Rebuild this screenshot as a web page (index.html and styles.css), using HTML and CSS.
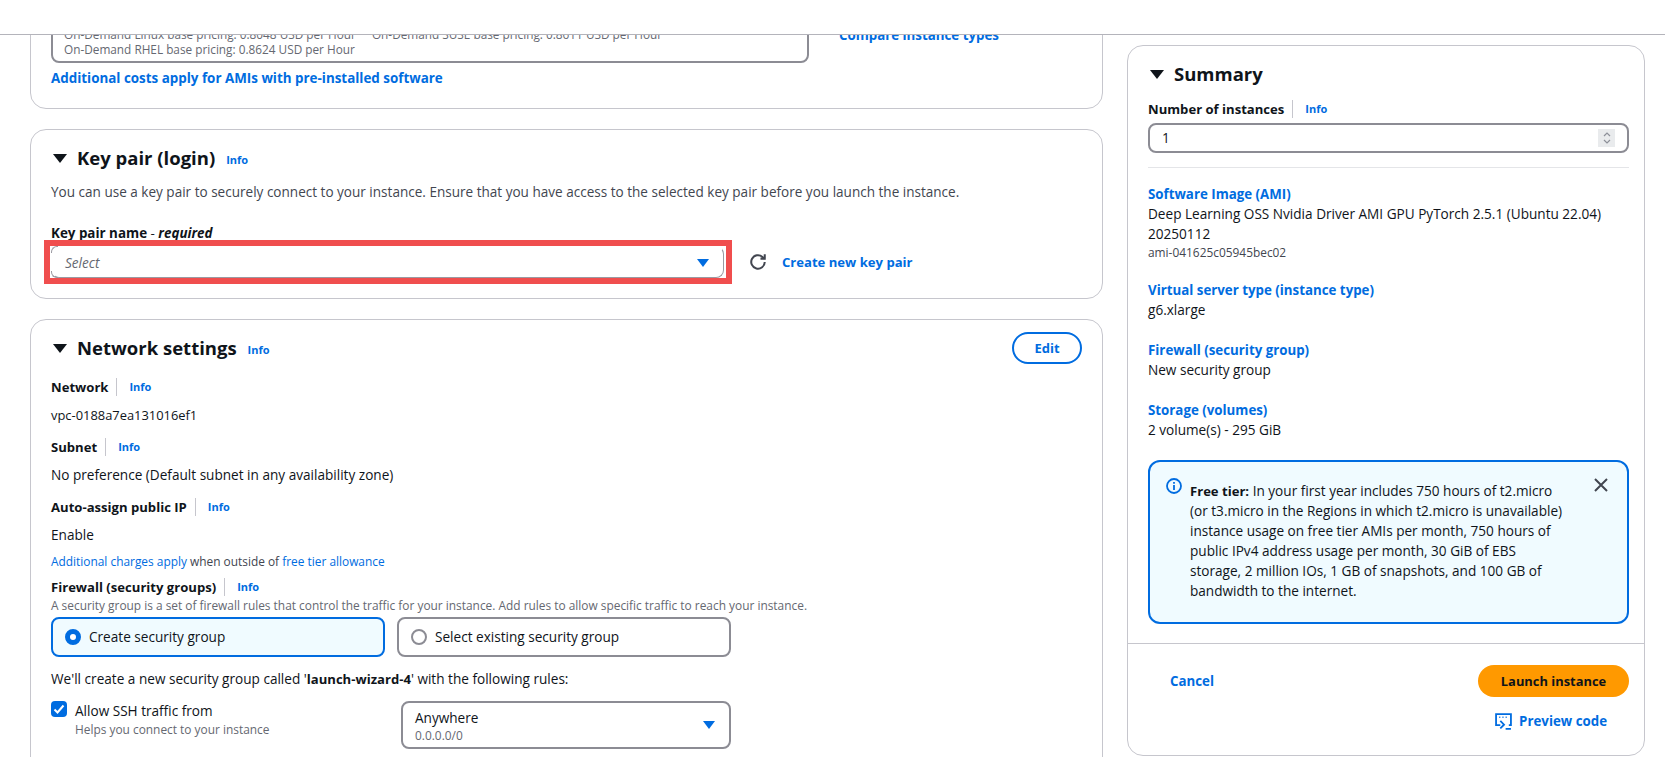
FILE: index.html
```html
<!DOCTYPE html>
<html lang="en">
<head>
<meta charset="utf-8">
<title>Launch an instance</title>
<link rel="stylesheet" href="styles.css">
</head>
<body>
<div class="topbar"></div>
<div class="page">
  <main class="col-left">
    <section class="card card-ami">
      <div class="pricing-row">
        <div class="pricing">
          <div class="pricing-line"><span class="p1">On-Demand Linux base pricing: 0.8048 USD per Hour</span><span>On-Demand SUSE base pricing: 0.8611 USD per Hour</span></div>
          <div class="pricing-line">On-Demand RHEL base pricing: 0.8624 USD per Hour</div>
        </div>
        <a class="link bold compare">Compare instance types</a>
      </div>
      <a class="link bold costs">Additional costs apply for AMIs with pre-installed software</a>
    </section>

    <section class="card card-key">
      <div class="heading"><span class="caret"></span><h2>Key pair (login)</h2><a class="info-h">Info</a></div>
      <p class="desc">You can use a key pair to securely connect to your instance. Ensure that you have access to the selected key pair before you launch the instance.</p>
      <div class="label key-label"><b>Key pair name</b> - <b><i>required</i></b></div>
      <div class="key-row">
        <div class="select-wrap">
          <div class="select"><span>Select</span><span class="tri"></span></div>
          <div class="highlight"></div>
        </div>
        <svg class="refresh" width="18" height="18" viewBox="0 0 16 16" fill="none" stroke="#424650" stroke-width="1.8"><path d="M14 8a6 6 0 1 1-2-4.500L14 5"/><path d="M14 1.200V5h-3.800" stroke-linejoin="miter"/></svg>
        <a class="link bold create">Create new key pair</a>
      </div>
    </section>

    <section class="card card-net">
      <div class="heading net-heading">
        <span class="caret"></span><h2>Network settings</h2><a class="info-h">Info</a>
        <button class="edit">Edit</button>
      </div>
      <div class="field-label"><b>Network</b><a class="info">Info</a></div>
      <div class="value v1 vpc">vpc-0188a7ea131016ef1</div>
      <div class="field-label fl"><b>Subnet</b><a class="info">Info</a></div>
      <div class="value v1">No preference (Default subnet in any availability zone)</div>
      <div class="field-label fl"><b>Auto-assign public IP</b><a class="info">Info</a></div>
      <div class="value v1">Enable</div>
      <div class="small charges"><a class="link">Additional charges apply</a> when outside of <a class="link">free tier allowance</a></div>
      <div class="field-label fw"><b>Firewall (security groups)</b><a class="info">Info</a></div>
      <div class="small muted">A security group is a set of firewall rules that control the traffic for your instance. Add rules to allow specific traffic to reach your instance.</div>
      <div class="tiles">
        <div class="tile tile-on"><span class="radio radio-on"></span>Create security group</div>
        <div class="tile"><span class="radio"></span>Select existing security group</div>
      </div>
      <p class="wizard">We'll create a new security group called '<b>launch-wizard-4</b>' with the following rules:</p>
      <div class="rule">
        <div class="check-col">
          <span class="check"><svg width="16" height="16" viewBox="0 0 16 16" fill="none" stroke="#fff" stroke-width="2"><path d="M3.500 8.500 6.500 11.500 12.500 4.500"/></svg></span>
          <div><div>Allow SSH traffic from</div><div class="small muted">Helps you connect to your instance</div></div>
        </div>
        <div class="select2">
          <div><div>Anywhere</div><div class="small muted">0.0.0.0/0</div></div>
          <span class="tri"></span>
        </div>
      </div>
    </section>
  </main>

  <aside class="summary">
    <div class="sum-top">
      <div class="heading sum-heading"><span class="caret"></span><h2>Summary</h2></div>
      <div class="field-label sum-label"><b>Number of instances</b><a class="info">Info</a></div>
      <div class="num-input"><span>1</span>
        <span class="spin"><svg width="12" height="16" viewBox="0 0 12 16" fill="none" stroke="#8d9099" stroke-width="1.2"><path d="M3 6 6 3l3 3M3 10l3 3 3-3"/></svg></span>
      </div>
      <hr class="rule-line">
      <div class="sum-item first">
        <a class="link bold">Software Image (AMI)</a>
        <div>Deep Learning OSS Nvidia Driver AMI GPU PyTorch 2.5.1 (Ubuntu 22.04) 20250112</div>
        <div class="small ami">ami-041625c05945bec02</div>
      </div>
      <div class="sum-item"><a class="link bold">Virtual server type (instance type)</a><div>g6.xlarge</div></div>
      <div class="sum-item"><a class="link bold">Firewall (security group)</a><div>New security group</div></div>
      <div class="sum-item"><a class="link bold">Storage (volumes)</a><div>2 volume(s) - 295 GiB</div></div>
      <div class="alert">
        <svg class="alert-icon" width="16" height="16" viewBox="0 0 16 16" fill="none" stroke="#006ce0" stroke-width="1.8"><circle cx="8" cy="8" r="7"/><path d="M8 7v5M8 4v1.800"/></svg>
        <div class="alert-text"><b>Free tier:</b> In your first year includes 750 hours of t2.micro (or t3.micro in the Regions in which t2.micro is unavailable) instance usage on free tier AMIs per month, 750 hours of public IPv4 address usage per month, 30 GiB of EBS storage, 2 million IOs, 1 GB of snapshots, and 100 GB of bandwidth to the internet.</div>
        <svg class="alert-x" width="16" height="16" viewBox="0 0 16 16" fill="none" stroke="#424650" stroke-width="2"><path d="M2 2l12 12M14 2 2 14"/></svg>
      </div>
    </div>
    <div class="sum-foot">
      <div class="foot-row"><a class="link bold">Cancel</a><button class="launch">Launch instance</button></div>
      <a class="link bold preview">
        <svg width="17" height="17" viewBox="0 0 16 16" fill="none" stroke="#006ce0" stroke-width="1.7"><path d="M5 11.500H1V1h14v10.500h-2"/><path d="M4 4h1M7 4h1M10 4h1" stroke-width="1.600"/><path d="M5 7.500 8.500 11 5 14.500M10 15h5"/></svg>
        Preview code</a>
    </div>
  </aside>
</div>
</body>
</html>
```
FILE: styles.css
```css
* { box-sizing: border-box; }
html, body { margin: 0; padding: 0; height: 757px; overflow: hidden; background: #fff; }
body { font-family: "Open Sans", "Noto Sans", sans-serif; font-size: 13.6px; line-height: 20px; color: #0f141a; }
b { font-size: 13.1px; }
.topbar { height: 35px; background: #fff; border-bottom: 1px solid #b4b4bb; position: relative; z-index: 2; }
.page { display: flex; height: 722px; overflow: hidden; padding-left: 30px; gap: 24px; }
.col-left { width: 1073px; flex: none; }
.link { color: #006ce0; text-decoration: none; }
.bold { font-weight: 700; font-size: 13.3px; }
.card { background: #fff; border: 1px solid #c6c6cd; border-radius: 16px; padding: 0 20px; margin-bottom: 20px; }
.card-ami { margin-top: -40px; padding-top: 21px; padding-bottom: 20px; }
.pricing-row { display: flex; align-items: flex-start; }
.pricing { width: 758px; height: 46px; border: 2px solid #8c8c94; border-radius: 8px; padding: 8px 11px; font-size: 11.800px; line-height: 15px; color: #656871; flex: none; }
.pricing-line { white-space: nowrap; }
.p1 { margin-right: 16px; }
.compare { margin-left: 30px; margin-top: 8px; }
.costs { display: block; margin-top: 5px; font-size: 13.400px; }
.heading { display: flex; align-items: center; height: 28px; }
.heading h2 { margin: 0; font-size: 18.500px; line-height: 28px; font-weight: 700; }
.caret { width: 0; height: 0; border-left: 7px solid transparent; border-right: 7px solid transparent; border-top: 9px solid #0f141a; margin-left: 2px; margin-right: 10px; flex: none; }
.info-h, .info { color: #006ce0; font-size: 11px; font-weight: 700; }
.info-h { margin-left: 11px; margin-top: 3px; }
.card-key { padding-top: 14px; padding-bottom: 20px; }
.desc { margin: 10px 0 0; color: #424650; font-size: 13.550px; }
.key-label { margin-top: 21px; height: 20px; font-size: 13.400px; }
.key-label b { font-size: 13.400px; }
.key-row { display: flex; align-items: center; margin-top: 3px; }
.select-wrap { position: relative; width: 673px; height: 32px; flex: none; }
.select { position: relative; height: 32px; border: 2px solid transparent; border-bottom: 1px solid #9a9aa2; border-right: 1px solid #9a9aa2; border-radius: 8px; display: flex; justify-content: space-between; align-items: center; padding: 0 14px 0 12px; font-style: italic; color: #656871; }
.select::before, .select::after { content: ""; position: absolute; left: -2px; width: 6px; height: 6px; border-left: 1px solid #9a9aa2; }
.select::before { top: -2px; border-top: 1px solid #9a9aa2; border-top-left-radius: 6px; }
.select::after { bottom: -1px; border-bottom: 1px solid #9a9aa2; border-bottom-left-radius: 6px; }
.tri { width: 0; height: 0; border-left: 6px solid transparent; border-right: 6px solid transparent; border-top: 8px solid #006ce0; flex: none; }
.highlight { position: absolute; left: -7px; top: -6px; width: 688px; height: 44px; border: 6px solid #f04e4e; z-index: 1; }
.refresh { margin-left: 25px; flex: none; }
.create { margin-left: 15px; font-size: 13.100px; }
.card-net { padding-top: 14px; height: 460px; margin-bottom: 0; }
.net-heading { position: relative; }
.edit { position: absolute; right: 0; top: -2px; width: 70px; height: 32px; border: 2px solid #006ce0; border-radius: 16px; background: #fff; color: #006ce0; font: 700 13px "Open Sans", sans-serif; }
.field-label { display: flex; align-items: center; height: 20px; }
.field-label .info { margin-left: 8px; padding-left: 12px; border-left: 1px solid #c6c6cd; line-height: 18px; }
.net-heading + .field-label { margin-top: 15px; }
.value { color: #0f141a; }
.v1 { margin-top: 8px; }
.vpc { font-size: 12.900px; }
.fl { margin-top: 12px; }
.small { font-size: 11.900px; line-height: 16px; }
.muted { color: #656871; }
.charges { margin-top: 8px; color: #424650; }
.fw { margin-top: 8px; }
.tiles { display: flex; gap: 12px; margin-top: 4px; }
.tile { width: 334px; height: 40px; border: 2px solid #8c8c94; border-radius: 8px; display: flex; align-items: center; padding-left: 12px; }
.tile-on { border-color: #006ce0; background: #f0fbff; }
.radio { width: 16px; height: 16px; border: 2px solid #8c8c94; border-radius: 50%; margin-right: 8px; flex: none; }
.radio-on { border: 5px solid #006ce0; background: #fff; }
.wizard { margin: 12px 0 0; }
.rule { display: flex; margin-top: 12px; }
.check-col { width: 350px; display: flex; align-items: flex-start; flex: none; }
.check { width: 16px; height: 16px; background: #006ce0; border-radius: 4px; margin-right: 8px; flex: none; display: flex; }
.select2 { width: 330px; height: 48px; border: 2px solid #8c8c94; border-radius: 8px; display: flex; justify-content: space-between; align-items: center; padding: 0 14px 0 12px; line-height: 19px; }
.summary { width: 518px; height: 711px; margin-top: 10px; border: 1px solid #c6c6cd; border-radius: 16px; flex: none; display: flex; flex-direction: column; background: #fff; }
.sum-top { padding: 14px 15px 0 20px; flex: 1; border-bottom: 1px solid #c6c6cd; }
.sum-heading h2 { font-size: 18.500px; }
.sum-heading .caret { margin-left: 2px; margin-right: 10px; }
.sum-label { margin-top: 11px; }
.num-input { height: 30px; margin-top: 4px; border: 2px solid #8c8c94; border-radius: 8px; display: flex; justify-content: space-between; align-items: center; padding: 0 12px; }
.spin { width: 17px; height: 18px; background: #e9ebed; display: flex; align-items: center; justify-content: center; }
.rule-line { border: 0; border-top: 1px solid #e4e5e8; margin: 14px 0 0; }
.sum-item { margin-top: 20px; }
.sum-item.first { margin-top: 16px; }
.sum-item .link { display: block; }
.ami { color: #424650; }
.alert { position: relative; margin-top: 20px; height: 164px; border: 2px solid #006ce0; border-radius: 12px; background: #f0fbff; padding: 19px 0 0 40px; }
.alert-text { width: 377px; }
.alert-icon { position: absolute; left: 16px; top: 16px; }
.alert-x { position: absolute; right: 18px; top: 15px; }
.sum-foot { height: 111px; padding: 21px 15px 0 20px; }
.foot-row { display: flex; justify-content: space-between; align-items: center; padding-left: 22px; }
.launch { width: 151px; height: 32px; border: 0; border-radius: 16px; background: #ff9900; color: #0f141a; font: 700 12.900px "Open Sans", sans-serif; }
.preview { display: flex; justify-content: flex-end; align-items: center; gap: 7px; margin-top: 14px; padding-right: 22px; }
```
